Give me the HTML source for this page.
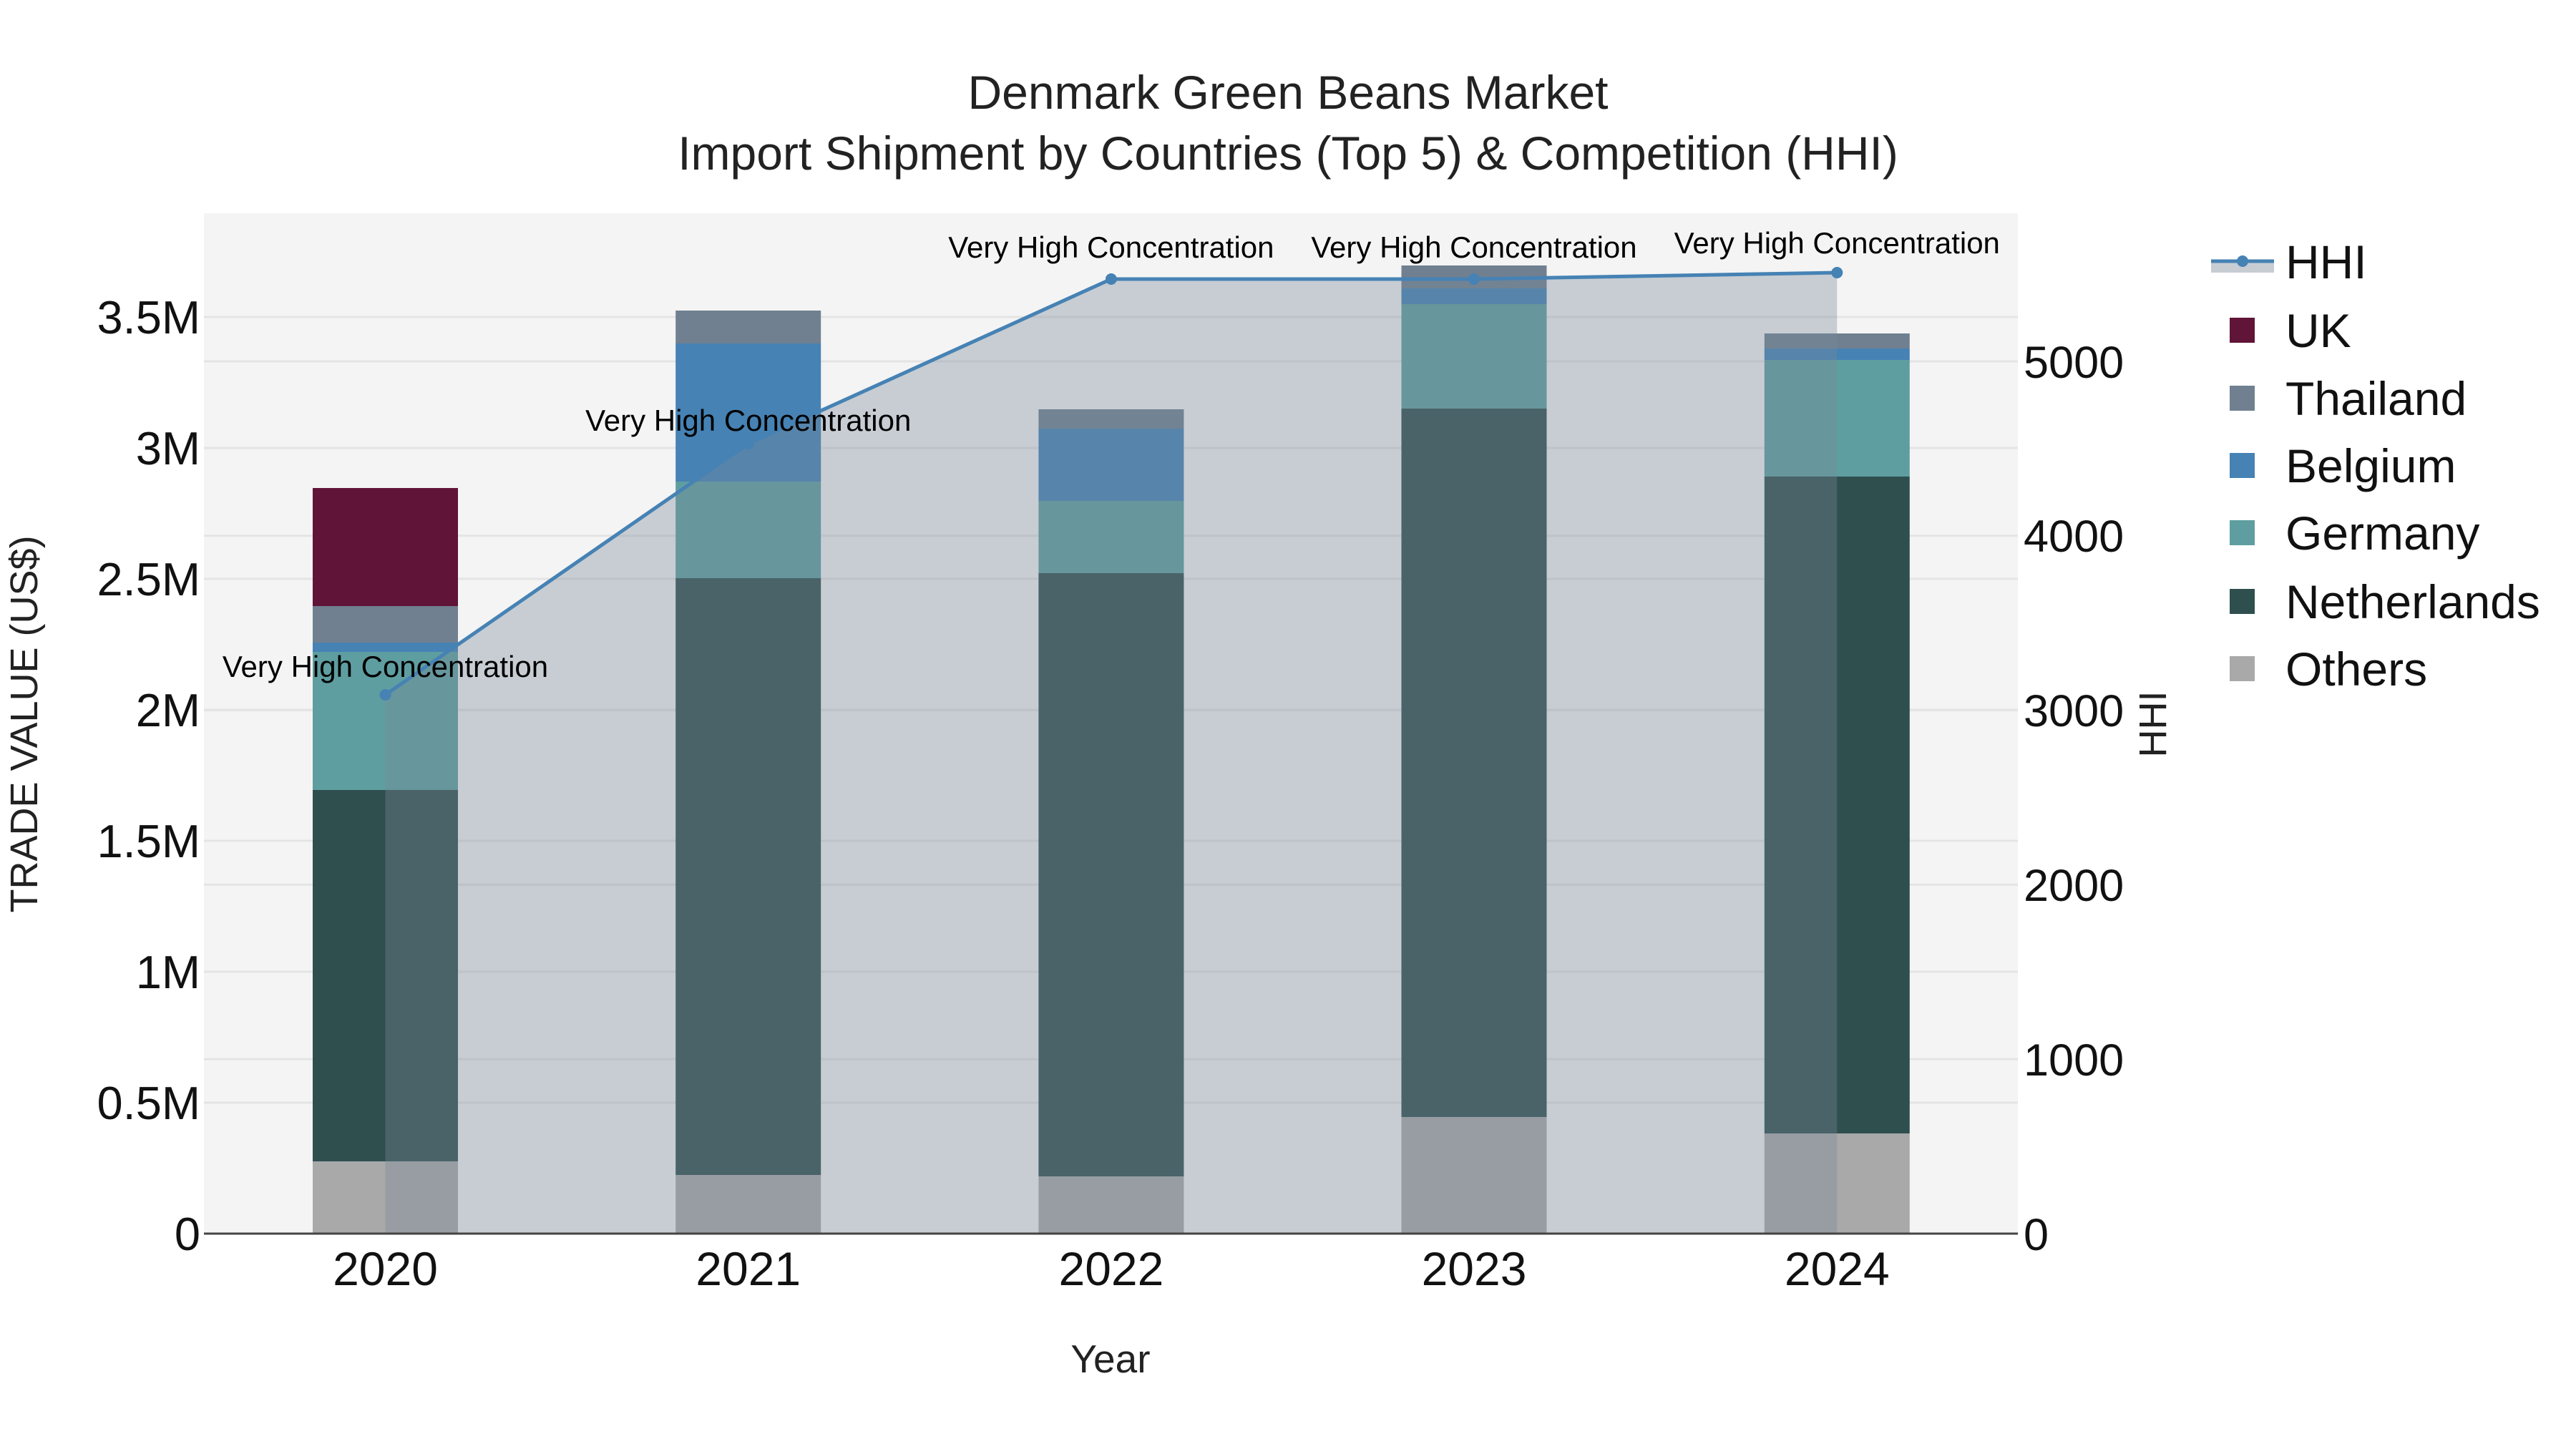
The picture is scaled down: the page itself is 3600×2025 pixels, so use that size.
<!DOCTYPE html>
<html><head><meta charset="utf-8"><style>html,body{margin:0;padding:0;background:#fff}svg{display:block}</style></head>
<body>
<svg width="3600" height="2025" viewBox="0 0 3600 2025" xmlns="http://www.w3.org/2000/svg" font-family="Liberation Sans, Arial, sans-serif">
<rect x="285" y="298" width="2535" height="1426" fill="#f4f4f4"/>
<g stroke="#e4e4e4" stroke-width="3">
<line x1="285" x2="2820" y1="1541" y2="1541"/>
<line x1="285" x2="2820" y1="1358" y2="1358"/>
<line x1="285" x2="2820" y1="1175" y2="1175"/>
<line x1="285" x2="2820" y1="992" y2="992"/>
<line x1="285" x2="2820" y1="809" y2="809"/>
<line x1="285" x2="2820" y1="626" y2="626"/>
<line x1="285" x2="2820" y1="443" y2="443"/>
<line x1="285" x2="2820" y1="1480.2" y2="1480.2"/>
<line x1="285" x2="2820" y1="1236.4" y2="1236.4"/>
<line x1="285" x2="2820" y1="992.6" y2="992.6"/>
<line x1="285" x2="2820" y1="748.8" y2="748.8"/>
<line x1="285" x2="2820" y1="505" y2="505"/>
</g>
<g>
<rect x="437" y="1623" width="203" height="101" fill="#a9a9a9"/>
<rect x="437" y="1104" width="203" height="519" fill="#2f4f4f"/>
<rect x="437" y="911" width="203" height="193" fill="#5f9ea0"/>
<rect x="437" y="898" width="203" height="13" fill="#4682b4"/>
<rect x="437" y="847" width="203" height="51" fill="#708090"/>
<rect x="437" y="682" width="203" height="165" fill="#601437"/>
</g>
<g>
<rect x="944.2" y="1642" width="203" height="82" fill="#a9a9a9"/>
<rect x="944.2" y="808" width="203" height="834" fill="#2f4f4f"/>
<rect x="944.2" y="673" width="203" height="135" fill="#5f9ea0"/>
<rect x="944.2" y="480" width="203" height="193" fill="#4682b4"/>
<rect x="944.2" y="434" width="203" height="46" fill="#708090"/>
</g>
<g>
<rect x="1451.4" y="1644" width="203" height="80" fill="#a9a9a9"/>
<rect x="1451.4" y="801" width="203" height="843" fill="#2f4f4f"/>
<rect x="1451.4" y="700" width="203" height="101" fill="#5f9ea0"/>
<rect x="1451.4" y="599" width="203" height="101" fill="#4682b4"/>
<rect x="1451.4" y="572" width="203" height="27" fill="#708090"/>
</g>
<g>
<rect x="1958.5" y="1561" width="203" height="163" fill="#a9a9a9"/>
<rect x="1958.5" y="571" width="203" height="990" fill="#2f4f4f"/>
<rect x="1958.5" y="425" width="203" height="146" fill="#5f9ea0"/>
<rect x="1958.5" y="403" width="203" height="22" fill="#4682b4"/>
<rect x="1958.5" y="371" width="203" height="32" fill="#708090"/>
</g>
<g>
<rect x="2465.8" y="1584" width="203" height="140" fill="#a9a9a9"/>
<rect x="2465.8" y="666" width="203" height="918" fill="#2f4f4f"/>
<rect x="2465.8" y="503" width="203" height="163" fill="#5f9ea0"/>
<rect x="2465.8" y="487" width="203" height="16" fill="#4682b4"/>
<rect x="2465.8" y="466" width="203" height="21" fill="#708090"/>
</g>
<polygon points="538.5,971 1045.7,620 1552.9,390 2060,390 2567.3,381 2567.3,1724 538.5,1724" fill="rgb(119,136,153)" fill-opacity="0.36"/>
<polyline points="538.5,971 1045.7,620 1552.9,390 2060,390 2567.3,381" fill="none" stroke="#4682b4" stroke-width="5"/>
<g fill="#4682b4">
<circle cx="538.5" cy="971" r="8"/><circle cx="1045.7" cy="620" r="8"/><circle cx="1552.9" cy="390" r="8"/><circle cx="2060" cy="390" r="8"/><circle cx="2567.3" cy="381" r="8"/>
</g>
<line x1="285" x2="2820" y1="1724" y2="1724" stroke="#444" stroke-width="3"/>
<g font-size="42" fill="#000" text-anchor="middle">
<text x="538.5" y="946">Very High Concentration</text>
<text x="1045.7" y="602">Very High Concentration</text>
<text x="1552.9" y="360">Very High Concentration</text>
<text x="2060" y="360">Very High Concentration</text>
<text x="2567.3" y="354">Very High Concentration</text>
</g>
<g font-size="65" fill="#111" text-anchor="end">
<text x="280" y="1747">0</text>
<text x="280" y="1564">0.5M</text>
<text x="280" y="1381">1M</text>
<text x="280" y="1198">1.5M</text>
<text x="280" y="1015">2M</text>
<text x="280" y="832">2.5M</text>
<text x="280" y="649">3M</text>
<text x="280" y="466">3.5M</text>
</g>
<g font-size="63" fill="#111" text-anchor="start">
<text x="2828" y="1747">0</text>
<text x="2828" y="1503">1000</text>
<text x="2828" y="1259">2000</text>
<text x="2828" y="1015">3000</text>
<text x="2828" y="771">4000</text>
<text x="2828" y="528">5000</text>
</g>
<g font-size="66" fill="#111" text-anchor="middle">
<text x="538.5" y="1796">2020</text>
<text x="1045.7" y="1796">2021</text>
<text x="1552.9" y="1796">2022</text>
<text x="2060" y="1796">2023</text>
<text x="2567.3" y="1796">2024</text>
</g>
<text x="1552" y="1918" font-size="55" fill="#222" text-anchor="middle">Year</text>
<text transform="translate(52,1012) rotate(-90)" font-size="54" fill="#222" text-anchor="middle">TRADE VALUE (US$)</text>
<text transform="translate(3027,1012) rotate(-90)" font-size="54" fill="#222" text-anchor="middle">HHI</text>
<g font-size="66" fill="#222" text-anchor="middle">
<text x="1800" y="152">Denmark Green Beans Market</text>
<text x="1800" y="237">Import Shipment by Countries (Top 5) &amp; Competition (HHI)</text>
</g>
<rect x="3090" y="367" width="88" height="14" fill="#c8ccd3"/>
<line x1="3090" x2="3178" y1="365" y2="365" stroke="#4682b4" stroke-width="5"/>
<circle cx="3134" cy="365" r="8" fill="#4682b4"/>
<rect x="3116" y="444" width="35" height="35" fill="#601437"/>
<rect x="3116" y="539" width="35" height="35" fill="#708090"/>
<rect x="3116" y="633" width="35" height="35" fill="#4682b4"/>
<rect x="3116" y="727" width="35" height="35" fill="#5f9ea0"/>
<rect x="3116" y="823" width="35" height="35" fill="#2f4f4f"/>
<rect x="3116" y="917" width="35" height="35" fill="#a9a9a9"/>
<g font-size="66" fill="#111">
<text x="3194" y="389">HHI</text>
<text x="3194" y="485">UK</text>
<text x="3194" y="580">Thailand</text>
<text x="3194" y="674">Belgium</text>
<text x="3194" y="768">Germany</text>
<text x="3194" y="864">Netherlands</text>
<text x="3194" y="958">Others</text>
</g>
</svg>
</body></html>
